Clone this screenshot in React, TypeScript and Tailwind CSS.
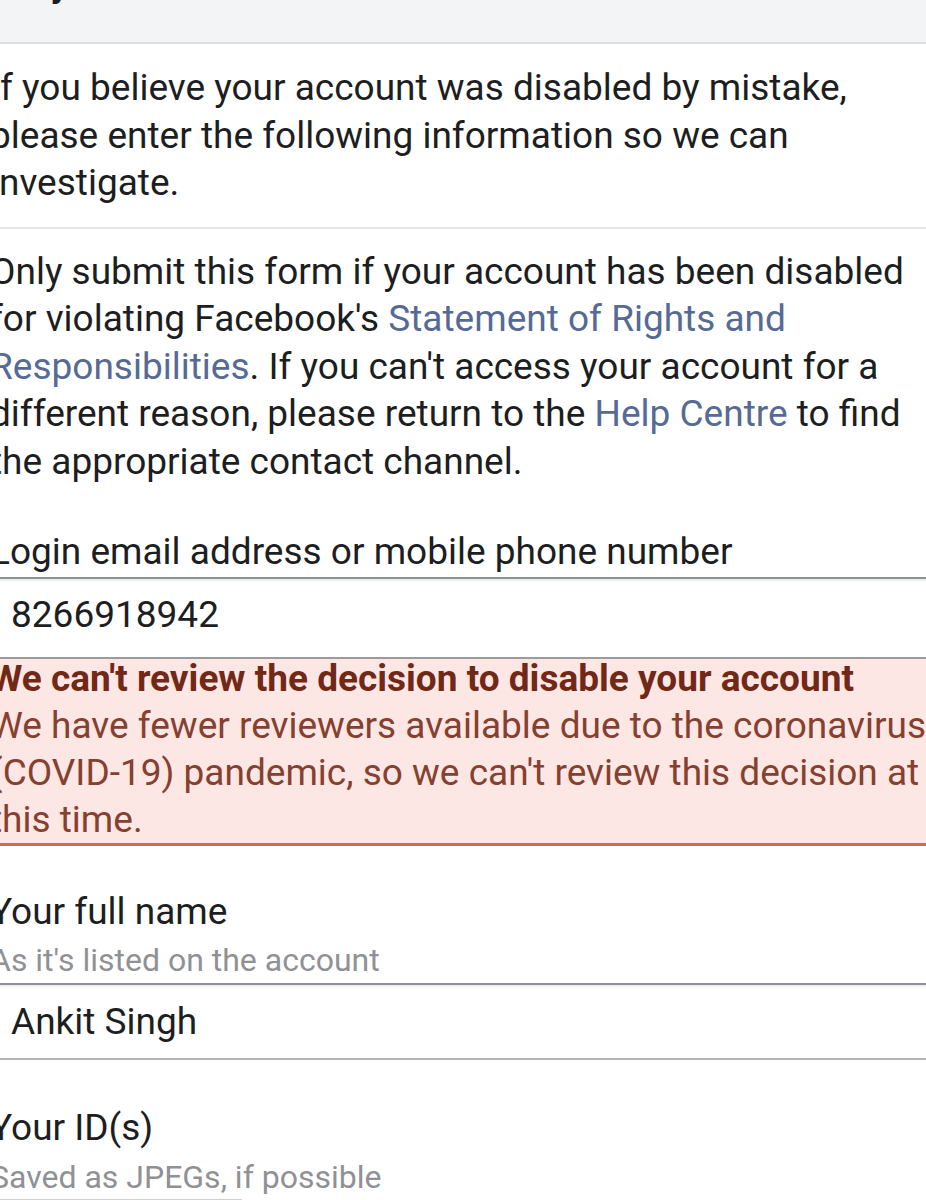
import React from "react";

// Formulaire de réclamation : compte désactivé (vue mobile, zoomée et rognée)

function Link({ children }: { children: React.ReactNode }) {
  return <span className="text-[#566a96]">{children}</span>;
}

function FieldLabel({ title, hint }: { title: string; hint?: string }) {
  return (
    <div>
      <div className="text-[37px] leading-[47.5px] whitespace-nowrap">{title}</div>
      {hint && (
        <div className="mt-[5px] text-[32px] leading-[40px] text-[#8f9195] whitespace-nowrap">
          {hint}
        </div>
      )}
    </div>
  );
}

export default function App() {
  return (
    <div className="min-h-screen w-[926px] overflow-hidden bg-white font-['Roboto',sans-serif] text-[#1c1e21]">
      {/* En-tête gris, titre coupé par le haut de la capture */}
      <div className="h-[44px] overflow-hidden border-b-2 border-[#dcdee2] bg-[#f3f4f6]">
        <h1 className="ml-[18px] -mt-[40px] text-[37px] leading-[47.5px] font-bold whitespace-nowrap">
          My Personal Account was Disabled
        </h1>
      </div>

      <div className="-ml-[10px] w-[960px]">
        {/* Introduction */}
        <p className="border-b-2 border-[#e5e6e8] pt-[20px] pb-[20px] text-[37px] leading-[47.5px] whitespace-nowrap">
          If you believe your account was disabled by mistake,
          <br />
          please enter the following information so we can
          <br />
          investigate.
        </p>

        <p className="pt-[19px] text-[37px] leading-[47.5px] whitespace-nowrap">
          Only submit this form if your account has been disabled
          <br />
          for violating Facebook's <Link>Statement of Rights and</Link>
          <br />
          <Link>Responsibilities</Link>. If you can't access your account for a
          <br />
          different reason, please return to the <Link>Help Centre</Link> to find
          <br />
          the appropriate contact channel.
        </p>

        {/* Identifiant */}
        <div className="mt-[43px]">
          <FieldLabel title="Login email address or mobile phone number" />
        </div>
        <div className="mt-[1px] flex h-[80px] items-center border-t-2 border-[#8e9196] pb-[6px] pl-[21px] text-[37px] shadow-[inset_0_2px_2px_rgba(0,0,0,0.08)]">
          8266918942
        </div>

        {/* Avertissement COVID-19 */}
        <div className="border-t-2 border-b-[3px] border-t-[#9b9b9b] border-b-[#cc6f52] bg-[#fde7e4] whitespace-nowrap">
          <div className="text-[37px] leading-[40px] font-bold text-[#722817]">
            We can't review the decision to disable your account
          </div>
          <div className="mt-[3px] text-[37px] leading-[47px] text-[#86402f]">
            We have fewer reviewers available due to the coronavirus
            <br />
            (COVID-19) pandemic, so we can't review this decision at
            <br />
            this time.
          </div>
        </div>

        {/* Nom complet */}
        <div className="mt-[42px]">
          <FieldLabel title="Your full name" hint="As it's listed on the account" />
        </div>
        <div className="mt-[3px] flex h-[77px] items-center border-y-2 border-t-[#8e9196] border-b-[#b3b5b9] pl-[21px] text-[37px] shadow-[inset_0_2px_2px_rgba(0,0,0,0.08)]">
          Ankit Singh
        </div>

        {/* Pièces d'identité */}
        <div className="mt-[44px]">
          <FieldLabel title="Your ID(s)" hint="Saved as JPEGs, if possible" />
        </div>
        <div className="mt-[2px] h-[60px] w-[252px] border-t-2 border-[#cfd1d5]" />
      </div>
    </div>
  );
}
